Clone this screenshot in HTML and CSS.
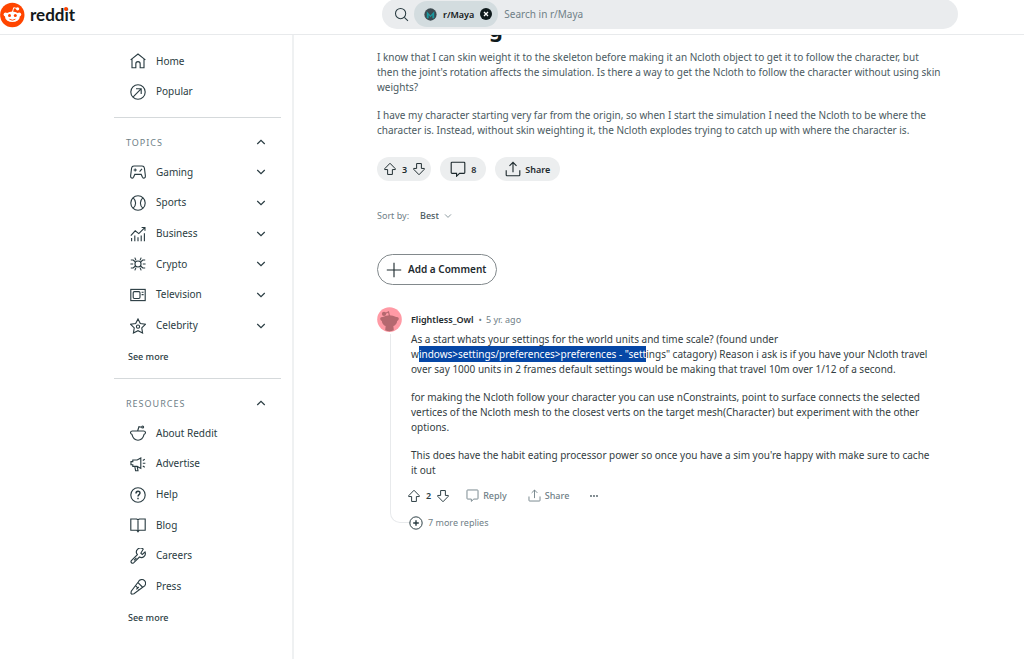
FILE: index.html
```html
<!DOCTYPE html>
<html lang="en">
<head>
<meta charset="utf-8">
<meta name="viewport" content="width=device-width, initial-scale=1">
<title>r/Maya</title>
<link rel="stylesheet" href="styles.css">
</head>
<body>
<svg class="sprite" aria-hidden="true">
  <symbol id="up" viewBox="0 0 20 20"><path d="M10 1.8 17.6 9.6v1.2h-4.2v7H6.6v-7H2.4V9.6z"/></symbol>
  <symbol id="down" viewBox="0 0 20 20"><path d="M10 18.2 17.6 10.4V9.2h-4.2v-7H6.6v7H2.4v1.2z"/></symbol>
  <symbol id="bubble" viewBox="0 0 20 20"><path d="M2.5 1.5h15a1 1 0 0 1 1 1v12a1 1 0 0 1-1 1H12L8.2 19v-3.5H2.5a1 1 0 0 1-1-1v-12a1 1 0 0 1 1-1z"/></symbol>
  <symbol id="share" viewBox="0 0 20 20"><path d="M1.5 11.5v6a1 1 0 0 0 1 1h15a1 1 0 0 0 1-1v-6M10 14V1.6M5.6 6 10 1.6 14.4 6"/></symbol>
  <symbol id="chev" viewBox="0 0 20 20"><path d="m2.5 6 7.5 7.5L17.5 6"/></symbol>
</svg>

<header class="topbar">
  <a class="brand" href="#" aria-label="reddit">
    <svg class="logo" viewBox="0 0 26 26" aria-hidden="true">
      <circle cx="12.3" cy="13" r="12.2" fill="#ff4500"/>
      <path d="m12.5 10 1.2-4.3 3.4.8" fill="none" stroke="#fff" stroke-width="1"/>
      <circle cx="17.6" cy="6.8" r="1.6" fill="#fff"/>
      <circle cx="5.6" cy="12.6" r="2" fill="#fff"/><circle cx="19.2" cy="12.6" r="2" fill="#fff"/>
      <ellipse cx="12.4" cy="14.8" rx="7.4" ry="5.3" fill="#fff"/>
      <circle cx="9.5" cy="13.5" r="1.5" fill="#ff4500"/><circle cx="15.3" cy="13.5" r="1.5" fill="#ff4500"/>
      <path d="M9.4 17.2q3 2 6 0" fill="none" stroke="#ff4500" stroke-width=".9"/>
    </svg>
    <span class="wordmark">redd<span class="dotted">i</span>t</span>
  </a>
  <form class="search" role="search">
    <svg class="icon" viewBox="0 0 20 20" aria-hidden="true"><circle cx="8.8" cy="8.8" r="6.8"/><path d="m13.8 13.8 4.8 4.8"/></svg>
    <span class="chip">
      <svg class="maya" viewBox="0 0 14 14" aria-hidden="true"><circle cx="7" cy="7" r="6.6" fill="#3d4a50"/><path d="M3 11V3.5L7 8l4-4.500V11L9 11V7.500L7 10 5 7.500V11z" fill="#1c9aa0"/></svg>
      <span>r/Maya</span>
      <button class="clear" type="button" aria-label="Remove r/Maya filter"><svg viewBox="0 0 12 12" aria-hidden="true"><circle cx="6" cy="6" r="6" fill="#0f1a1c"/><path d="m4 4 4 4M8 4 4 8" stroke="#fff" stroke-width="1.300"/></svg></button>
    </span>
    <input type="search" placeholder="Search in r/Maya" aria-label="Search in r/Maya">
  </form>
</header>

<div class="layout">
  <nav class="sidebar" aria-label="Main">
    <ul class="links">
      <li><a href="#"><svg class="icon" viewBox="0 0 20 20"><path d="M.8 8.600 10 1.200l9.200 7.400M2.500 7.500v11h4.800v-5a2.700 2.700 0 0 1 5.400 0v5h4.800v-11"/></svg>Home</a></li>
      <li><a href="#"><svg class="icon" viewBox="0 0 20 20"><circle cx="10" cy="10" r="9"/><path d="M4 16 13.500 6.500M7.500 6h6.500v6.500"/></svg>Popular</a></li>
    </ul>
    <section class="group">
      <h2><button type="button" aria-expanded="true">TOPICS<svg class="caret open"><use href="#chev"/></svg></button></h2>
      <ul class="links">
        <li><button type="button"><svg class="icon" viewBox="0 0 20 20"><path d="M5 2.500h10a3 3 0 0 1 3 2.500l1.200 9.500c.4 3.500-2.400 4-3.600 2L14 13H6l-1.600 3.500c-1.200 2-4 1.500-3.600-2L2 5a3 3 0 0 1 3-2.500zM6.500 5.500v4M4.500 7.500h4M12 9.500l3-3.500"/></svg>Gaming<svg class="caret"><use href="#chev"/></svg></button></li>
        <li><button type="button"><svg class="icon" viewBox="0 0 20 20"><circle cx="10" cy="10" r="9"/><path d="M4 3.500c4 3.500 4 9.500 0 13M16 3.500c-4 3.500-4 9.500 0 13"/></svg>Sports<svg class="caret"><use href="#chev"/></svg></button></li>
        <li><button type="button"><svg class="icon" viewBox="0 0 20 20"><path d="m1 12 5.500-6L11 9.500 18.500 2M14.500 1.800h4.200v4.200M2 19v-4M6 19v-7M10 19v-5M14 19v-7M18 19V9"/></svg>Business<svg class="caret"><use href="#chev"/></svg></button></li>
        <li><button type="button"><svg class="icon" viewBox="0 0 20 20"><circle cx="10" cy="10" r="3.800"/><path d="M.5 10h3.500M16 10h3.500M1 5h3l2.800 2.500M19 5h-3l-2.800 2.500M1 15h3l2.800-2.500M19 15h-3l-2.800-2.500M6 2l1.500 3.500M14 2l-1.500 3.500M6 18l1.500-3.500M14 18l-1.500-3.500"/></svg>Crypto<svg class="caret"><use href="#chev"/></svg></button></li>
        <li><button type="button"><svg class="icon" viewBox="0 0 20 20"><rect x="1" y="3" width="18" height="14"/><rect x="4" y="5.800" width="8.500" height="8.500" rx="1.500"/><path d="M14.500 6.500h2.500M14.500 9.500h2.500"/></svg>Television<svg class="caret"><use href="#chev"/></svg></button></li>
        <li><button type="button"><svg class="icon" viewBox="0 0 20 20"><path d="m10 1.200 2.900 5.700 6.300 1-4.500 4.500 1 6.300L10 15.800l-5.700 2.900 1-6.300L.8 7.900l6.300-1z"/><circle cx="10" cy="10.800" r="2"/></svg>Celebrity<svg class="caret"><use href="#chev"/></svg></button></li>
      </ul>
      <a class="more" href="#">See more</a>
    </section>
    <section class="group">
      <h2><button type="button" aria-expanded="true">RESOURCES<svg class="caret open"><use href="#chev"/></svg></button></h2>
      <ul class="links">
        <li><a href="#"><svg class="icon" viewBox="0 0 20 20"><path d="M3 7.500h14c3 0 3 3.500.6 4.200C16.500 16 13.800 19 10 19s-6.500-3-7.600-7.300C0 11 0 7.500 3 7.500zM9.500 7.500l1.700-5.300 3.200.6"/><circle cx="15.800" cy="2.500" r="1.200"/></svg>About Reddit</a></li>
        <li><a href="#"><svg class="icon" viewBox="0 0 20 20"><path d="M13.500 2.500v13L9 13H3.500v-2H1.200V7h2.300V5H9zM6 13l1 5.500h3L9 13M16 5.500l2.500-1.500M16 9h3.200M16 12.500l2.500 1.500"/></svg>Advertise</a></li>
        <li><a href="#"><svg class="icon" viewBox="0 0 20 20"><circle cx="10" cy="10" r="9"/><path d="M7.500 8c0-3.500 5-3.500 5-.5 0 2-2.500 2-2.500 4.300M10 13.500v1.700" stroke-width="1.800"/></svg>Help</a></li>
        <li><a href="#"><svg class="icon" viewBox="0 0 20 20"><path d="M1 2.500h7.500L10 3.800l1.500-1.300H19v14h-7.500L10 18.500l-1.500-2H1zM10 3.800v14.700"/></svg>Blog</a></li>
        <li><a href="#"><svg class="icon" viewBox="0 0 20 20"><path d="m13.500 6.500 3-5a5 5 0 0 0-7.300 6.800l-7.500 7.500a2 2 0 0 0 2.800 2.800l7.300-7.300a5 5 0 0 0 7-6.300l-3.500 3z"/><path d="m5 15.500 3-3"/></svg>Careers</a></li>
        <li><a href="#"><svg class="icon" viewBox="0 0 20 20"><path d="M10.500 3.500a4.700 4.700 0 1 1 6.200 6.200L5 18.500l-2.800.5-1-1.200.4-2.600zM10 4.500l5.800 5.800M7.200 8.500l4.200 4.500M8 13l3-3"/></svg>Press</a></li>
      </ul>
      <a class="more" href="#">See more</a>
    </section>
  </nav>

  <main class="content">
    <article>
      <h1>g</h1>
      <div class="prose post">
        <p>I know that I can skin weight it to the skeleton before making it an Ncloth object to get it to follow the character, but<br>then the joint's rotation affects the simulation. Is there a way to get the Ncloth to follow the character without using skin<br>weights?</p>
        <p>I have my character starting very far from the origin, so when I start the simulation I need the Ncloth to be where the<br>character is. Instead, without skin weighting it, the Ncloth explodes trying to catch up with where the character is.</p>
      </div>
      <div class="pills">
        <div class="pill votes">
          <button type="button" aria-label="Upvote"><svg class="icon vote"><use href="#up"/></svg></button>
          <span>3</span>
          <button type="button" aria-label="Downvote"><svg class="icon vote"><use href="#down"/></svg></button>
        </div>
        <button class="pill comments" type="button"><svg class="icon"><use href="#bubble"/></svg>8</button>
        <button class="pill sharing" type="button"><svg class="icon"><use href="#share"/></svg>Share</button>
      </div>
    </article>

    <div class="sort">
      <label for="sort">Sort by:</label>
      <select id="sort"><option>Best</option></select>
      <svg class="caret small" aria-hidden="true"><use href="#chev"/></svg>
    </div>

    <button class="add" type="button"><svg class="icon" viewBox="0 0 20 20"><path d="M10 1v18M1 10h18"/></svg>Add a Comment</button>

    <article class="comment">
      <div class="rail">
        <svg class="avatar" viewBox="0 0 26 26" aria-hidden="true">
          <circle cx="13" cy="13" r="12.800" fill="#ff9aa5"/>
          <path d="M6 10.500q7-4 14 0c3-.6 3.600 2.800 1 4-.4 3-2 4.500-4 5.300l.5 4.500q-4.500 2.300-9 0l.5-4.500c-2-.8-3.600-2.300-4-5.300-2.600-1.200-2-4.600 1-4z" fill="#b5686f"/>
          <path d="m13 9.500-1-4.500-4 2" fill="none" stroke="#b5686f" stroke-width="1.200"/><circle cx="7.300" cy="7.200" r="2.200" fill="#b5686f"/>
        </svg>
        <span class="thread"></span>
      </div>
      <div class="body">
        <div class="meta"><a href="#">Flightless_Owl</a><span>•</span><time>5 yr. ago</time></div>
        <div class="prose">
          <p>As a start whats your settings for the world units and time scale? (found under<br>w<mark>indows&gt;settings/preferences&gt;preferences - "sett</mark>ings" catagory) Reason i ask is if you have your Ncloth travel<br>over say 1000 units in 2 frames default settings would be making that travel 10m over 1/12 of a second.</p>
          <p>for making the Ncloth follow your character you can use nConstraints, point to surface connects the selected<br>vertices of the Ncloth mesh to the closest verts on the target mesh(Character) but experiment with the other<br>options.</p>
          <p>This does have the habit eating processor power so once you have a sim you're happy with make sure to cache<br>it out</p>
        </div>
        <div class="actions">
          <div class="votes">
            <button type="button" aria-label="Upvote"><svg class="icon vote"><use href="#up"/></svg></button>
            <span>2</span>
            <button type="button" aria-label="Downvote"><svg class="icon vote"><use href="#down"/></svg></button>
          </div>
          <button class="action" type="button"><svg class="icon"><use href="#bubble"/></svg>Reply</button>
          <button class="action" type="button"><svg class="icon"><use href="#share"/></svg>Share</button>
          <button class="action" type="button" aria-label="More options"><svg class="dots" viewBox="0 0 8 4"><circle cx="1" cy="2" r=".9"/><circle cx="4" cy="2" r=".9"/><circle cx="7" cy="2" r=".9"/></svg></button>
        </div>
        <button class="replies" type="button"><svg class="icon" viewBox="0 0 20 20"><circle cx="10" cy="10" r="8.800"/><path d="M10 6v8M6 10h8" stroke-width="2"/></svg>7 more replies</button>
      </div>
    </article>
  </main>
</div>
</body>
</html>
```
FILE: styles.css
```css
* { box-sizing: border-box; }

body {
  margin: 0;
  min-height: 100vh;
  display: flex;
  flex-direction: column;
  background: #fff;
  color: #2a3c42;
  font: 10px/15px "Noto Sans", "Open Sans", sans-serif;
}

button, input, select { font: inherit; color: inherit; background: none; border: 0; padding: 0; margin: 0; }
button { cursor: pointer; display: flex; align-items: center; }
a { color: inherit; text-decoration: none; }
ul { list-style: none; margin: 0; padding: 0; }
svg { display: block; flex: none; }
.sprite { position: absolute; width: 0; height: 0; }

.icon, .caret { fill: none; stroke: currentColor; stroke-width: 1.4; width: 16px; height: 16px; }
.caret { width: 10px; height: 10px; stroke-width: 2.4; margin-left: auto; }
.caret.open { transform: rotate(180deg); }
.caret.small { width: 8px; height: 8px; margin: 0; stroke-width: 2; }

/* Top bar */
.topbar {
  display: grid;
  grid-template-columns: 382px minmax(0, 576px);
  align-items: center;
  height: 35px;
  padding-bottom: 8px;
  border-bottom: 1px solid #e8eaec;
}
.brand { display: flex; align-items: center; gap: 4px; }
.logo { width: 26px; height: 26px; }
.wordmark { font: 700 17px/24px Lato, sans-serif; color: #14181a; }
.dotted { position: relative; }
.dotted::after {
  content: "";
  position: absolute;
  top: 3px;
  left: 0;
  width: 4px;
  height: 4px;
  border-radius: 50%;
  background: #ff4500;
}
.search {
  display: flex;
  align-items: center;
  height: 30px;
  padding-left: 12px;
  margin-top: -1px;
  border-radius: 15px;
  background: #eaecee;
}
.search > .icon { width: 15px; height: 15px; }
.search input { flex: 1; min-width: 0; outline: 0; padding-left: 6px; }
.search input::placeholder { color: #6f8087; opacity: 1; }
.chip {
  display: flex;
  align-items: center;
  gap: 6px;
  height: 26px;
  margin-left: 5px;
  padding: 0 6px 0 10px;
  border-radius: 13px;
  background: #d3dcdf;
  color: #14181a;
  font-size: 9px;
  font-weight: 600;
}
.maya { width: 13px; height: 13px; }
.clear svg { width: 12px; height: 12px; }

/* Sidebar */
.layout { flex: 1; display: grid; grid-template-columns: 294px minmax(0, 1fr); }
.sidebar { padding: 11px 11px 0 114px; border-right: 2px solid #eff1f2; }
.links { display: grid; grid-auto-rows: 1fr; min-height: 61px; margin-bottom: 10px; }
.links a, .links button { width: 100%; height: 100%; display: flex; align-items: center; gap: 10px; padding: 0 15px 0 16px; text-align: left; }
.group { border-top: 1px solid #d5d9db; padding-top: 9px; margin-bottom: 6px; }
.group .links { min-height: 184px; margin: 0; }
.group h2 { margin: 0; font-size: 9px; font-weight: 400; letter-spacing: 1px; color: #6f8087; }
.group h2 button { width: 100%; height: 30px; padding: 0 15px 0 12px; letter-spacing: inherit; }
.group .caret { color: #2a3c42; }
.more { display: block; padding: 8px 14px; font-size: 9px; font-weight: 500; }

/* Post */
.content { padding: 0 20px 20px 83px; max-width: 680px; overflow: hidden; }
h1 { margin: -17px 0 12px; padding-left: 112px; font-size: 22px; line-height: 20px; font-weight: 700; color: #0f1a1c; }
.prose { white-space: nowrap; }
.prose p { margin: 0 0 13px; }
.post { color: #4a5a61; }
.pills { display: flex; gap: 9px; margin-top: 19px; }
.pill {
  display: flex;
  align-items: center;
  height: 24px;
  border-radius: 12px;
  background: #eceeef;
  color: #1d2a2e;
  font-size: 9px;
  font-weight: 600;
}
.votes { display: flex; align-items: center; gap: 5px; font-size: 9px; font-weight: 600; }
.vote { width: 14px; height: 14px; }
.pill.votes { padding: 0 5px 0 6px; }
.pill.comments { padding: 0 10px; gap: 5px; }
.pill.sharing { padding: 0 10px; gap: 4px; }
.sort { display: flex; align-items: center; margin-top: 27px; color: #6f8087; font-size: 9px; }
.sort select { appearance: none; margin: 0 5px 0 11px; font-weight: 500; color: #4a5a61; }
.add {
  gap: 6px;
  height: 31px;
  margin-top: 31px;
  padding: 0 10px 0 8px;
  border: 1px solid #82898c;
  border-radius: 16px;
  color: #1d2a2e;
  font-weight: 600;
}

/* Comments */
.comment { display: grid; grid-template-columns: 34px minmax(0, 1fr); margin-top: 22px; }
.rail { display: flex; flex-direction: column; }
.avatar { width: 25px; height: 25px; }
.thread {
  flex: 1;
  margin: 2px 0 7px 13px;
  border: solid #e8eaec;
  border-width: 0 0 1px 1px;
  border-bottom-left-radius: 10px;
}
.meta { display: flex; gap: 4px; align-items: center; height: 25px; color: #6f8087; font-size: 9px; }
.meta a { color: #1d2a2e; font-weight: 600; margin-right: 1px; }
.body .prose { color: #333d42; }
mark { background: #0647a6; color: #fff; padding: 1px 0; }
.actions { display: flex; align-items: center; gap: 21px; margin: -3px 0 12px -4px; height: 15px; }
.actions .votes { margin-right: -5px; }
.action { gap: 4px; color: #6f8087; font-size: 9px; font-weight: 500; }
.action .icon { width: 13px; height: 13px; }
.dots { width: 8px; height: 4px; fill: #4a5a61; }
.replies { gap: 5px; margin-left: -2px; color: #6f8087; font-size: 9px; }
.replies .icon { width: 14px; height: 14px; color: #2a3c42; }
```
